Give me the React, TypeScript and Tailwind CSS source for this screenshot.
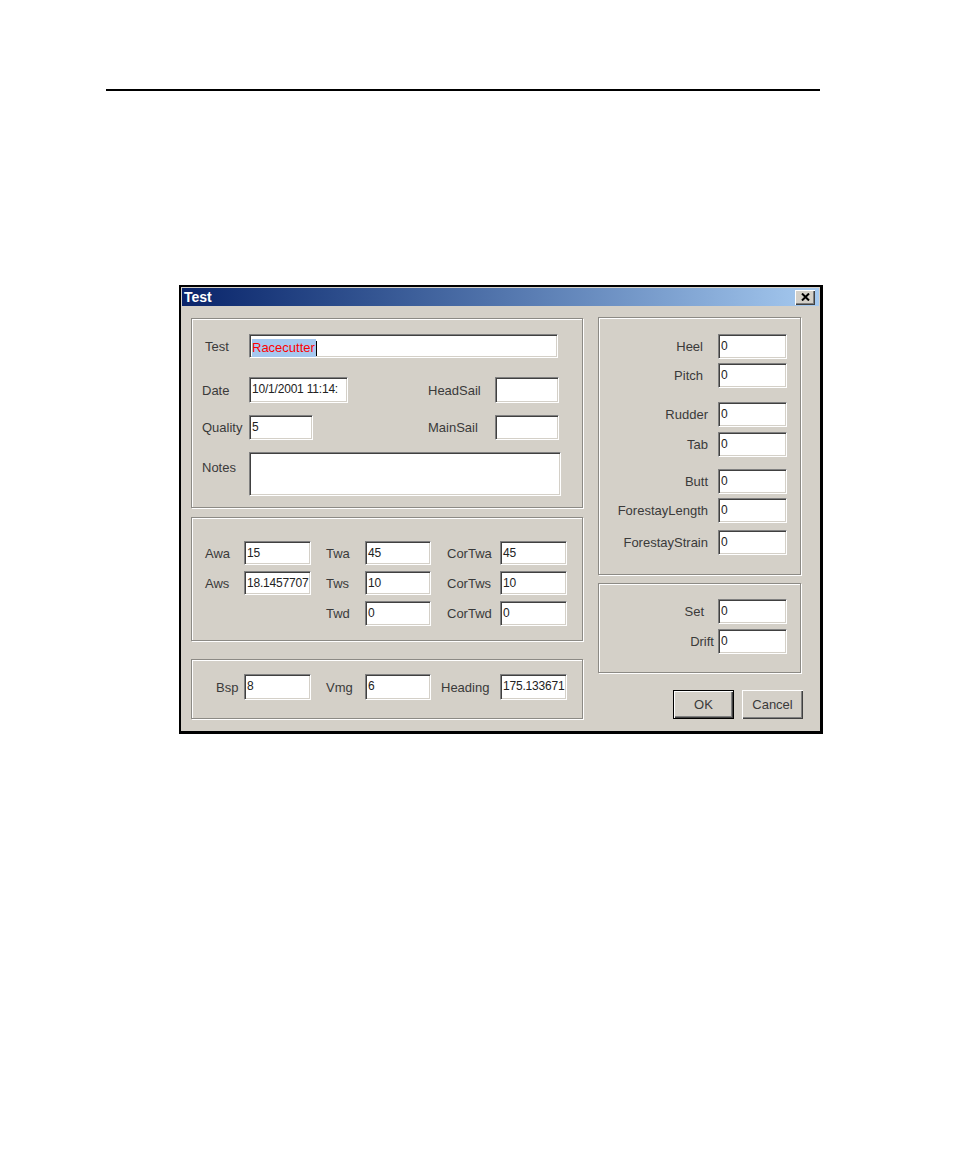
import React from 'react';

type Box = { className?: string; children?: React.ReactNode };

// sunken win32 edit box
const Field = ({ className = '', children }: Box) => (
  <div
    className={`shrink-0 bg-white border border-t-[#808080] border-l-[#808080] border-b-white border-r-white shadow-[inset_1px_1px_0_#404040,inset_-1px_-1px_0_#d4d0c8] pl-[2px] pt-[4px] text-[12px] tracking-[-0.2px] leading-[14px] text-[#222] whitespace-nowrap overflow-hidden ${className}`}
  >
    {children}
  </div>
);

// etched group frame
const Group = ({ className = '', children }: Box) => (
  <div className={`border border-[#8c8a85] shadow-[inset_1px_1px_0_#fff,1px_1px_0_#fff] ${className}`}>
    {children}
  </div>
);

const Label = ({ className = '', children }: Box) => (
  <div className={`shrink-0 flex items-center whitespace-nowrap pt-px ${className}`}>{children}</div>
);

const RightRow = ({ label, mt, mr = 'mr-[10px]' }: { label: string; mt: string; mr?: string }) => (
  <div className={`flex justify-end h-[25px] ${mt}`}>
    <Label className={mr}>{label}</Label>
    <Field className="w-[69px] h-[25px]">0</Field>
  </div>
);

export default function App() {
  return (
    <div className="min-h-[1159px] bg-white pt-[89px] font-['Liberation_Sans',Arial,sans-serif]">
      <div className="ml-[106px] w-[714px] h-[2px] bg-black" />

      {/* dialog */}
      <div className="ml-[179px] mt-[194px] w-[644px] h-[449px] border-l-2 border-t-2 border-r-[3px] border-b-[3px] border-black bg-[#d4d0c8] text-[13px] text-[#3a3a3a]">
        {/* title bar */}
        <div className="mx-px mt-px h-[18px] bg-gradient-to-r from-[#0a246a] to-[#a6caf0] flex items-center justify-between pl-[2px] pr-[4px]">
          <span className="text-white font-bold text-[14px] leading-none">Test</span>
          <div className="w-[20px] h-[15px] bg-[#d4d0c8] shadow-[inset_1px_1px_0_#fff,inset_-1px_-1px_0_#404040,inset_-2px_-2px_0_#808080] flex items-center justify-center">
            <svg width="9" height="8" viewBox="0 0 9 8">
              <path d="M1 0.5 L8 7.5 M8 0.5 L1 7.5" stroke="#000" strokeWidth="2" />
            </svg>
          </div>
        </div>

        <div className="flex pl-[10px] pt-[11px]">
          {/* left column */}
          <div className="w-[392px] mt-px">
            <Group className="h-[190px] pt-[15px] pl-[10px]">
              <div className="flex h-[24px]">
                <Label className="w-[47px] pl-[3px]">Test</Label>
                <Field className="w-[309px] h-[24px] pt-[2px] text-[13px] tracking-normal">
                  <span className="inline-block bg-[#a6c8ef] text-[#ff0000] h-[18px] leading-[18px] pr-px">Racecutter</span>
                  <span className="inline-block w-px h-[15px] bg-black align-top mt-[2px]" />
                </Field>
              </div>
              <div className="flex h-[26px] mt-[19px]">
                <Label className="w-[47px]">Date</Label>
                <Field className="w-[99px] h-[26px]">10/1/2001 11:14:</Field>
                <Label className="ml-[80px] w-[67px]">HeadSail</Label>
                <Field className="w-[64px] h-[26px]" />
              </div>
              <div className="flex h-[25px] mt-[12px]">
                <Label className="w-[47px]">Quality</Label>
                <Field className="w-[64px] h-[25px]">5</Field>
                <Label className="ml-[115px] w-[67px]">MainSail</Label>
                <Field className="w-[64px] h-[25px]" />
              </div>
              <div className="flex h-[44px] mt-[12px]">
                <div className="w-[47px] shrink-0 mt-[6px]">Notes</div>
                <Field className="w-[312px] h-[44px]" />
              </div>
            </Group>

            <Group className="h-[124px] mt-[9px] pt-[23px] pl-[13px]">
              <div className="flex h-[24px]">
                <Label className="w-[39px]">Awa</Label>
                <Field className="w-[67px] h-[24px]">15</Field>
                <Label className="ml-[15px] w-[39px]">Twa</Label>
                <Field className="w-[66px] h-[24px]">45</Field>
                <Label className="ml-[16px] w-[53px]">CorTwa</Label>
                <Field className="w-[67px] h-[24px]">45</Field>
              </div>
              <div className="flex h-[24px] mt-[6px]">
                <Label className="w-[39px]">Aws</Label>
                <Field className="w-[67px] h-[24px]">18.1457707</Field>
                <Label className="ml-[15px] w-[39px]">Tws</Label>
                <Field className="w-[66px] h-[24px]">10</Field>
                <Label className="ml-[16px] w-[53px]">CorTws</Label>
                <Field className="w-[67px] h-[24px]">10</Field>
              </div>
              <div className="flex h-[25px] mt-[6px]">
                <div className="w-[121px] shrink-0" />
                <Label className="w-[39px]">Twd</Label>
                <Field className="w-[66px] h-[25px]">0</Field>
                <Label className="ml-[16px] w-[53px]">CorTwd</Label>
                <Field className="w-[67px] h-[25px]">0</Field>
              </div>
            </Group>

            <Group className="h-[60px] mt-[18px] pt-[14px] pl-[24px]">
              <div className="flex h-[26px]">
                <Label className="w-[28px]">Bsp</Label>
                <Field className="w-[67px] h-[26px]">8</Field>
                <Label className="ml-[15px] w-[39px]">Vmg</Label>
                <Field className="w-[66px] h-[26px]">6</Field>
                <Label className="ml-[10px] w-[59px]">Heading</Label>
                <Field className="w-[67px] h-[26px]">175.133671</Field>
              </div>
            </Group>
          </div>

          {/* right column */}
          <div className="w-[205px] ml-[15px]">
            <Group className="w-[203px] h-[258px] pt-[16px] pr-[13px]">
              <RightRow label="Heel" mt="" mr="mr-[15px]" />
              <RightRow label="Pitch" mt="mt-[4px]" mr="mr-[15px]" />
              <RightRow label="Rudder" mt="mt-[14px]" />
              <RightRow label="Tab" mt="mt-[5px]" />
              <RightRow label="Butt" mt="mt-[12px]" />
              <RightRow label="ForestayLength" mt="mt-[4px]" />
              <RightRow label="ForestayStrain" mt="mt-[7px]" />
            </Group>

            <Group className="w-[203px] h-[90px] mt-[8px] pt-[15px] pr-[13px]">
              <RightRow label="Set" mt="" mr="mr-[14px]" />
              <RightRow label="Drift" mt="mt-[5px]" mr="mr-[4px]" />
            </Group>

            <div className="flex justify-end gap-[8px] mt-[17px]">
              <div className="w-[61px] h-[29px] border border-black shadow-[inset_1px_1px_0_#fff,inset_-1px_-1px_0_#404040,inset_-2px_-2px_0_#808080] flex items-center justify-center">
                OK
              </div>
              <div className="w-[61px] h-[29px] shadow-[inset_1px_1px_0_#fff,inset_-1px_-1px_0_#404040,inset_-2px_-2px_0_#808080] flex items-center justify-center">
                Cancel
              </div>
            </div>
          </div>
        </div>
      </div>
    </div>
  );
}
